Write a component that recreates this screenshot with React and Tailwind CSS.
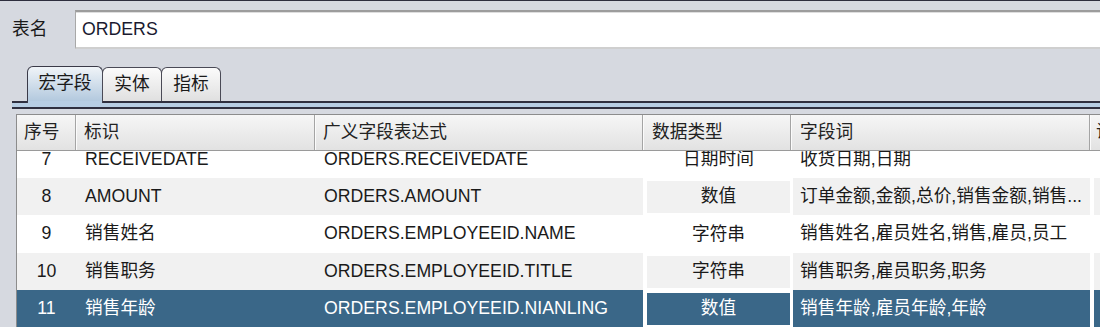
const rows = [
  { n: 7, id: 'RECEIVEDATE', expr: 'ORDERS.RECEIVEDATE', type: '日期时间', words: '收货日期,日期', h: 'h-[37px]' },
  { n: 8, id: 'AMOUNT', expr: 'ORDERS.AMOUNT', type: '数值', words: '订单金额,金额,总价,销售金额,销售...', h: 'h-[37px]' },
  { n: 9, id: '销售姓名', expr: 'ORDERS.EMPLOYEEID.NAME', type: '字符串', words: '销售姓名,雇员姓名,销售,雇员,员工', h: 'h-[38px]' },
  { n: 10, id: '销售职务', expr: 'ORDERS.EMPLOYEEID.TITLE', type: '字符串', words: '销售职务,雇员职务,职务', h: 'h-[37px]' },
  { n: 11, id: '销售年龄', expr: 'ORDERS.EMPLOYEEID.NIANLING', type: '数值', words: '销售年龄,雇员年龄,年龄', h: 'h-[37px]', selected: true },
];

const Tab = ({ label, active }) => (
  <div
    className={
      active
        ? 'w-[76px] h-[35px] flex items-center justify-center border border-b-0 border-[#3a3a48] rounded-t-[6px] bg-gradient-to-b from-[#f0f4f8] to-[#b3c9de] text-[#1a1a1a]'
        : 'w-[60px] h-[34px] -ml-px flex items-center justify-center border border-b-0 border-[#4a4a56] rounded-t-[6px] bg-gradient-to-b from-[#fbfbfb] to-[#e0e0e0] text-[#1a1a1a]'
    }
  >
    {label}
  </div>
);

const Row = ({ row, index }) => {
  const bg = row.selected ? 'bg-[#3a6788]' : index % 2 === 1 ? 'bg-[#f1f1f1]' : 'bg-white';
  const fg = row.selected ? 'text-white' : 'text-[#1a1a1a]';
  return (
    <div className={`flex ${row.h} bg-white ${fg}`}>
      <div className={`flex w-[626px] shrink-0 ${bg}`}>
        <div className="w-[59px] shrink-0 flex items-center justify-center">{row.n}</div>
        <div className="w-[239px] shrink-0 flex items-center pl-[9px]">{row.id}</div>
        <div className="w-[328px] shrink-0 flex items-center pl-[9px]">{row.expr}</div>
      </div>
      <div className="w-[148px] shrink-0 flex pl-[4px] pr-[1px] pt-[3px] pb-[2px]">
        <div className={`flex-1 flex items-center justify-center ${bg}`}>{row.type}</div>
      </div>
      <div className="w-[299px] shrink-0 flex pl-[2px]">
        <div className={`flex-1 flex items-center pl-[7px] whitespace-nowrap overflow-hidden ${bg}`}>{row.words}</div>
      </div>
      <div className="flex-1 flex pl-[4px]">
        <div className={`flex-1 ${bg}`} />
      </div>
    </div>
  );
};

export default function App() {
  return (
    <div className="w-[1100px] h-[327px] overflow-hidden bg-[#d6d9e0] text-[17.7px] leading-none [font-family:'Liberation_Sans','Noto_Sans_CJK_SC',sans-serif]">
      <div className="h-px bg-[#2e2e3e]" />

      {/* table name */}
      <div className="flex items-center mt-[9px] h-[39px]">
        <div className="w-[75px] shrink-0 pl-[12px] text-[#1a1a1a]">表名</div>
        <div className="flex-1 -mr-[10px] h-full flex items-center pl-[6px] bg-white border-t-2 border-l border-b-2 border-t-[#9c9c9c] border-l-[#a8a8a8] border-b-[#cfcfcf] shadow-[inset_0_1px_0_#dedede] text-[#1a1a30]">
          ORDERS
        </div>
      </div>

      {/* tabs */}
      <div className="mt-[17px] ml-[12px]">
        <div className="flex items-end h-[35px] pl-[15px]">
          <Tab label="宏字段" active />
          <Tab label="实体" />
          <Tab label="指标" />
        </div>
        <div className="flex h-[2px]">
          <div className="w-[15px] bg-[#2f2f3f]" />
          <div className="w-[76px] bg-[#b7cde3] border-x border-[#3a3a48]" />
          <div className="flex-1 bg-[#2f2f3f]" />
        </div>
        <div className="h-[4px] bg-[#b7cde3]" />
        <div className="h-[2px] bg-[#2f2f3f]" />
      </div>

      {/* table */}
      <div className="mt-[5px] ml-[16px] border-l border-t border-[#8c8c8c]">
        <div className="flex h-[36px] bg-gradient-to-b from-[#f6f6f6] to-[#e2e2e2] border-b border-[#9a9a9a] text-[#222]">
          <div className="w-[59px] shrink-0 flex items-center pl-[7px] border-r border-[#a4a4a4]">序号</div>
          <div className="w-[239px] shrink-0 flex items-center pl-[8px] border-r border-[#a4a4a4] shadow-[inset_1px_0_0_#fbfbfb]">标识</div>
          <div className="w-[328px] shrink-0 flex items-center pl-[8px] border-r border-[#a4a4a4] shadow-[inset_1px_0_0_#fbfbfb]">广义字段表达式</div>
          <div className="w-[148px] shrink-0 flex items-center pl-[9px] border-r border-[#a4a4a4] shadow-[inset_1px_0_0_#fbfbfb]">数据类型</div>
          <div className="w-[299px] shrink-0 flex items-center pl-[9px] border-r border-[#a4a4a4] shadow-[inset_1px_0_0_#fbfbfb]">字段词</div>
          <div className="flex-1 flex items-center pl-[6px] whitespace-nowrap overflow-hidden shadow-[inset_1px_0_0_#fbfbfb]">说明</div>
        </div>
        <div className="h-[176px] overflow-hidden">
          <div className="-mt-[10px]">
            {rows.map((r, i) => (
              <Row key={r.n} row={r} index={i} />
            ))}
          </div>
        </div>
      </div>
    </div>
  );
}
